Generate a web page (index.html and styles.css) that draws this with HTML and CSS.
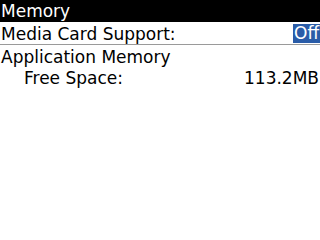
FILE: index.html
```html
<!DOCTYPE html>
<html>
<head>
<meta charset="utf-8">
<link rel="stylesheet" href="styles.css">
</head>
<body>
<div class="screen">
  <div class="title">Memory</div>
  <div class="row sep">
    <span class="label">Media Card Support:</span>
    <span class="choice">Off</span>
  </div>
  <div class="row">
    <span class="label">Application Memory</span>
  </div>
  <div class="row indent">
    <span class="label">Free Space:</span>
    <span class="value">113.2MB</span>
  </div>
</div>
</body>
</html>
```
FILE: styles.css
```css
html, body {
  margin: 0;
  padding: 0;
  background: #fff;
}
.screen {
  width: 320px;
  height: 240px;
  font-family: "DejaVu Sans", sans-serif;
  font-size: 17px;
  color: #000;
  overflow: hidden;
}
.title {
  background: #000;
  color: #fff;
  height: 22px;
  line-height: 23px;
  padding-left: 1px;
}
.row {
  display: flex;
  justify-content: space-between;
  align-items: flex-start;
  box-sizing: border-box;
  height: 22px;
  padding-top: 2px;
  line-height: 20px;
  padding-left: 1px;
}
.row.sep {
  height: 23px;
  border-bottom: 1px solid #9a9a9a;
}
.row.indent {
  padding-left: 24px;
  padding-top: 1px;
  line-height: 21px;
}
.choice {
  background: #2a5ca8;
  color: #fff;
  height: 19px;
  line-height: 19px;
  width: 27px;
  box-sizing: border-box;
  padding-left: 1px;
}
.value {
  padding-right: 1px;
}
```
